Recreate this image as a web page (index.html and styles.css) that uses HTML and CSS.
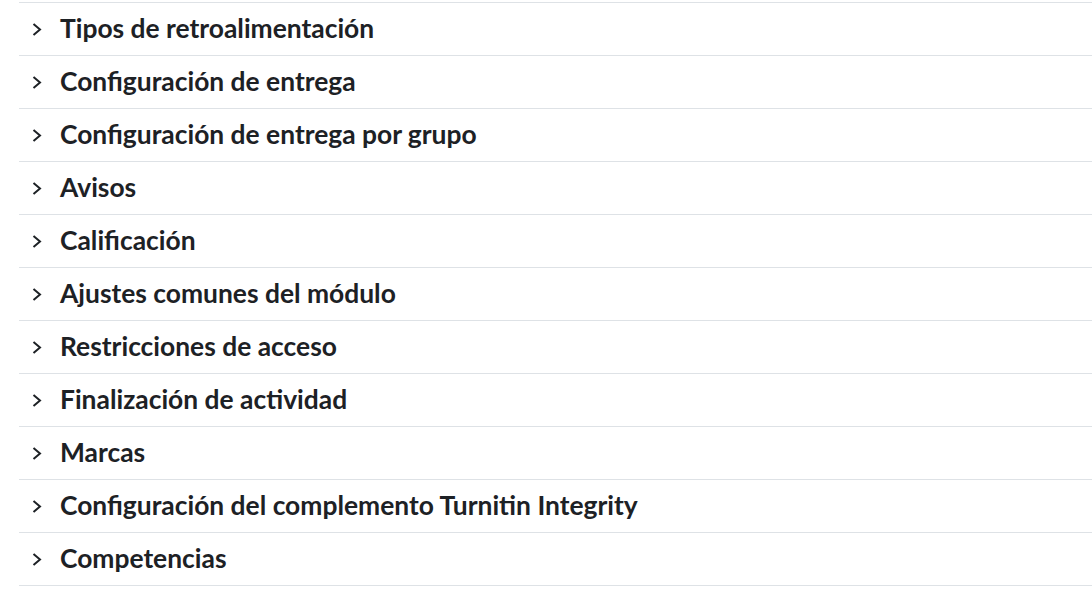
FILE: index.html
```html
<!DOCTYPE html>
<html lang="es">
<head>
<meta charset="utf-8">
<link rel="stylesheet" href="styles.css">
</head>
<body>
<div class="list">
  <div class="row"><span class="chev"><svg width="10" height="13" viewBox="0 0 10 13"><polyline points="1.5,1 8,6.5 1.5,12" fill="none" stroke="#1d2125" stroke-width="2"/></svg></span><span class="title">Tipos de retroalimentación</span></div>
  <div class="row"><span class="chev"><svg width="10" height="13" viewBox="0 0 10 13"><polyline points="1.5,1 8,6.5 1.5,12" fill="none" stroke="#1d2125" stroke-width="2"/></svg></span><span class="title">Configuración de entrega</span></div>
  <div class="row"><span class="chev"><svg width="10" height="13" viewBox="0 0 10 13"><polyline points="1.5,1 8,6.5 1.5,12" fill="none" stroke="#1d2125" stroke-width="2"/></svg></span><span class="title">Configuración de entrega por grupo</span></div>
  <div class="row"><span class="chev"><svg width="10" height="13" viewBox="0 0 10 13"><polyline points="1.5,1 8,6.5 1.5,12" fill="none" stroke="#1d2125" stroke-width="2"/></svg></span><span class="title">Avisos</span></div>
  <div class="row"><span class="chev"><svg width="10" height="13" viewBox="0 0 10 13"><polyline points="1.5,1 8,6.5 1.5,12" fill="none" stroke="#1d2125" stroke-width="2"/></svg></span><span class="title">Calificación</span></div>
  <div class="row"><span class="chev"><svg width="10" height="13" viewBox="0 0 10 13"><polyline points="1.5,1 8,6.5 1.5,12" fill="none" stroke="#1d2125" stroke-width="2"/></svg></span><span class="title">Ajustes comunes del módulo</span></div>
  <div class="row"><span class="chev"><svg width="10" height="13" viewBox="0 0 10 13"><polyline points="1.5,1 8,6.5 1.5,12" fill="none" stroke="#1d2125" stroke-width="2"/></svg></span><span class="title">Restricciones de acceso</span></div>
  <div class="row"><span class="chev"><svg width="10" height="13" viewBox="0 0 10 13"><polyline points="1.5,1 8,6.5 1.5,12" fill="none" stroke="#1d2125" stroke-width="2"/></svg></span><span class="title">Finalización de actividad</span></div>
  <div class="row"><span class="chev"><svg width="10" height="13" viewBox="0 0 10 13"><polyline points="1.5,1 8,6.5 1.5,12" fill="none" stroke="#1d2125" stroke-width="2"/></svg></span><span class="title">Marcas</span></div>
  <div class="row"><span class="chev"><svg width="10" height="13" viewBox="0 0 10 13"><polyline points="1.5,1 8,6.5 1.5,12" fill="none" stroke="#1d2125" stroke-width="2"/></svg></span><span class="title">Configuración del complemento Turnitin Integrity</span></div>
  <div class="row"><span class="chev"><svg width="10" height="13" viewBox="0 0 10 13"><polyline points="1.5,1 8,6.5 1.5,12" fill="none" stroke="#1d2125" stroke-width="2"/></svg></span><span class="title">Competencias</span></div>
</div>
</body>
</html>
```
FILE: styles.css
```css
html, body {
  margin: 0;
  padding: 0;
  background: #fff;
}
body {
  font-family: Lato, "Noto Sans", sans-serif;
  color: #1d2125;
}
.list {
  margin: 2px 0 0 19px;
  border-top: 1px solid #dee2e6;
}
.row {
  display: flex;
  align-items: center;
  height: 52px;
  border-bottom: 1px solid #dee2e6;
}
.chev {
  display: flex;
  align-items: center;
  width: 10px;
  height: 13px;
  margin-left: 13px;
  margin-right: 18px;
}
.chev svg {
  display: block;
}
.title {
  font-size: 26.4px;
  font-weight: 700;
  line-height: 1;
  margin-top: -2px;
}
```
